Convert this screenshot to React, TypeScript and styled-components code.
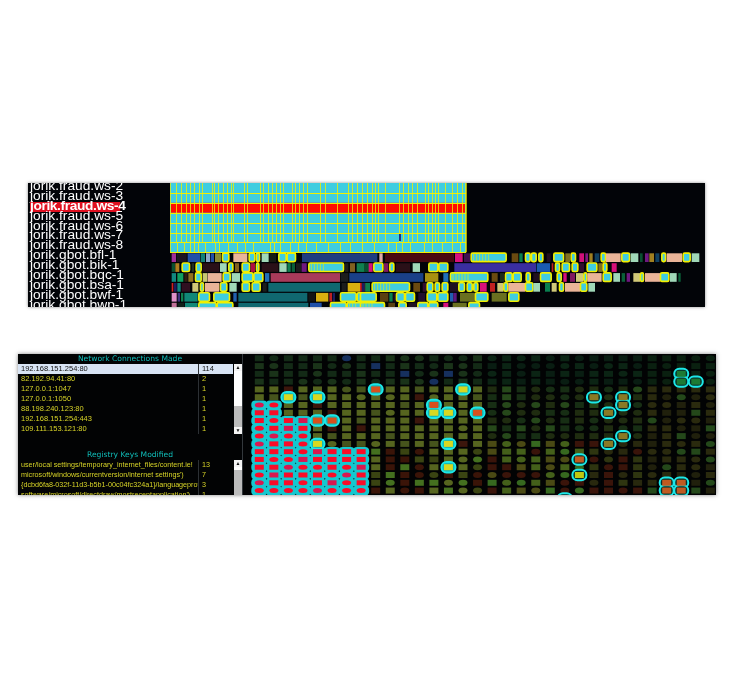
import * as React from 'react';
import styled, {createGlobalStyle} from 'styled-components';

const GlobalStyle = createGlobalStyle`
  html, body {
    margin: 0;
    padding: 0;
    background: #fff;
  }
`;

// the top chart is drawn in page coordinates, read off the zoomed reference
const ROW_H = 9.9;
const CYAN = '#3fcde0';
const YELLOW = '#f2f000';

const hostNames = [
    'jorik.fraud.ws-2', 'jorik.fraud.ws-3', 'jorik.fraud.ws-4', 'jorik.fraud.ws-5',
    'jorik.fraud.ws-6', 'jorik.fraud.ws-7', 'jorik.fraud.ws-8', 'jorik.gbot.bfl-1',
    'jorik.gbot.bik-1', 'jorik.gbot.bqc-1', 'jorik.gbot.bsa-1', 'jorik.gbot.bwf-1',
    'jorik.gbot.bwp-1',
];

const fraudCuts = [
    176, 181, 186, 190, 194, 199, 202, 212, 214, 218, 223, 227, 231, 233, 244, 247, 260, 263, 268, 272,
    276, 280, 283, 292, 295, 299, 303, 307, 320, 325, 337, 348, 352, 357, 362, 367, 372, 375, 378, 385,
    399, 403, 408, 412, 417, 425, 428, 432, 435, 438, 445, 452, 457, 462,
];
const fraud8Cuts = [
    177, 184, 190, 194, 198, 205, 215, 219, 228, 237, 245, 253, 270, 274, 280, 290, 298, 306, 316, 328,
    340, 350, 362, 374, 388, 396, 402, 410, 424, 432, 442, 452, 460,
];

type Segment = [number, number, string];

const O = 'outline';

// [zoomed x0, zoomed x1, colour]; first list is x = 20 + zx / 3, second is x = 360 + zx / 3
const rowsLeft: Segment[][] = [
    [[455, 468, '#a02c98'], [470, 500, '#1c1420'], [503, 540, '#2050a8'], [542, 555, '#108078'], [558, 570, '#8aa8c8'], [572, 582, '#2050a8'], [585, 603, '#8a8a30'], [606, 628, O], [640, 682, '#eab498'], [686, 706, O], [708, 720, O], [725, 746, '#a0d8b8'], [748, 768, '#141c14'], [775, 800, O], [800, 828, O], [846, 1050, '#1e3c80']],
    [[455, 465, '#0a5030'], [466, 478, '#b08020'], [485, 510, O], [515, 522, '#203020'], [527, 545, O], [548, 598, '#2a1018'], [600, 620, '#a0d8b8'], [625, 640, O], [645, 657, '#806020'], [665, 690, O], [692, 705, '#b01040'], [708, 718, O], [725, 775, '#2a1018'], [778, 800, '#a0d8b8'], [802, 812, '#108050'], [815, 825, '#0a6038'], [828, 845, '#1c1c1c'], [845, 860, '#701880'], [865, 972, O], [975, 985, '#1c1c1c'], [990, 1005, '#806020'], [1010, 1020, '#108050'], [1025, 1035, '#108050'], [1038, 1050, '#0a5030']],
    [[455, 468, '#108880'], [472, 490, '#10a060'], [493, 503, '#302010'], [505, 520, '#907020'], [525, 545, O], [548, 562, '#c8c870'], [563, 605, '#eab498'], [608, 632, O], [635, 660, '#a0d8b8'], [665, 700, O], [700, 730, O], [735, 748, '#2070b8'], [752, 960, '#a83a5a'], [962, 985, '#1c1c1c'], [988, 1050, '#1a4088']],
    [[455, 460, '#d02020'], [462, 470, '#1c1c60'], [472, 482, '#108880'], [485, 510, '#301020'], [517, 535, '#d0c878'], [540, 552, O], [555, 598, '#eab498'], [600, 622, O], [628, 650, '#a0d8b8'], [665, 690, O], [695, 722, O], [728, 740, '#1c1c1c'], [745, 960, '#106870'], [965, 980, '#1c1c1c'], [983, 1020, '#d8b010'], [1025, 1050, '#403010']],
    [[455, 470, '#e090c8'], [473, 480, '#403080'], [483, 490, '#108050'], [493, 533, '#108878'], [535, 570, O], [580, 630, O], [640, 650, '#2060b0'], [655, 862, '#106870'], [865, 885, '#141414'], [888, 925, '#d8b010'], [928, 936, '#c02020'], [938, 945, '#1c1c60'], [960, 1010, O], [1010, 1050, O]],
    [[455, 470, '#c07098'], [473, 493, '#102018'], [495, 533, '#108878'], [535, 590, O], [590, 640, O], [655, 865, '#106870'], [870, 905, '#2050a8'], [930, 980, O], [980, 1050, O]],
];

const rowsRight: Segment[][] = [
    [[0, 52, '#1e3c80'], [58, 68, '#e0a8a8'], [75, 282, '#4a0810'], [285, 308, '#d8107a'], [312, 330, '#401050'], [332, 440, O], [455, 475, '#6a4a10'], [478, 488, '#0a8050'], [495, 512, O], [513, 530, O], [535, 550, O], [560, 572, '#201020'], [580, 612, O], [616, 630, '#807020'], [632, 648, O], [658, 672, '#d0107a'], [676, 684, '#801880'], [688, 698, '#a08020'], [704, 718, '#104060'], [722, 738, O], [738, 782, '#eab498'], [784, 810, O], [812, 835, '#a0d8b8'], [840, 848, '#0a5030'], [855, 866, '#701880'], [868, 882, '#a08020'], [886, 898, '#104060'], [904, 918, O], [920, 966, '#eab498'], [968, 992, O], [995, 1018, '#a0d8b8']],
    [[0, 8, '#108050'], [12, 22, '#0a5030'], [26, 38, '#d8107a'], [40, 70, O], [72, 85, '#801860'], [88, 103, O], [108, 150, '#2a1018'], [158, 180, '#a0d8b8'], [205, 235, O], [235, 265, O], [283, 528, '#3a2ea0'], [530, 570, '#1a5ab0'], [575, 580, '#c02020'], [585, 600, O], [605, 630, O], [635, 655, O], [658, 672, '#301030'], [680, 712, O], [715, 728, '#807020'], [728, 742, O], [755, 770, '#d8107a']],
    [[0, 190, '#1a4088'], [195, 235, '#a89010'], [250, 265, '#2070b8'], [270, 385, O], [395, 413, '#6a4a10'], [420, 432, '#1c2c1c'], [435, 458, O], [458, 485, O], [497, 512, O], [520, 538, '#201020'], [540, 575, O], [590, 605, O], [610, 620, '#d8107a'], [630, 645, '#801860'], [648, 670, '#d0c878'], [670, 682, O], [682, 725, '#eab498'], [728, 755, O], [760, 780, '#a0d8b8'], [785, 795, '#0a6038'], [800, 810, '#701880'], [820, 840, '#d0c878'], [840, 852, O], [855, 900, '#eab498'], [900, 928, O], [930, 950, '#a0d8b8'], [955, 962, '#0a6038']],
    [[0, 5, '#d02020'], [6, 14, '#1c1c60'], [16, 30, '#108050'], [35, 150, O], [160, 180, '#6a4a10'], [188, 198, '#301030'], [200, 220, O], [224, 240, O], [245, 265, O], [270, 295, '#201020'], [295, 315, O], [320, 338, O], [340, 355, O], [360, 380, '#d8107a'], [390, 405, '#c02020'], [412, 430, '#d0c878'], [430, 445, O], [445, 495, '#eab498'], [495, 520, O], [520, 540, '#a0d8b8'], [555, 570, '#0a8050'], [575, 590, '#d0c878'], [597, 612, O], [615, 660, '#eab498'], [660, 682, O], [685, 705, '#a0d8b8']],
    [[0, 50, O], [60, 85, '#5a4010'], [88, 98, '#0a8050'], [100, 108, '#201020'], [108, 135, O], [135, 165, O], [175, 195, '#201030'], [200, 232, O], [232, 265, O], [270, 280, '#2060b0'], [280, 290, '#601880'], [300, 345, '#6a7020'], [345, 385, O], [395, 440, '#6a7020'], [445, 478, O]],
    [[0, 75, O], [85, 105, '#5a4010'], [115, 140, O], [145, 170, '#201020'], [172, 205, O], [205, 235, O], [250, 265, '#d8107a'], [278, 320, '#6a7020'], [325, 360, O]],
];

const TimelineRow = ({segments, base, y}: { segments: Segment[]; base: number; y: number }) => (
    <>
        {segments.map(([x0, x1, color], i) => {
            const left = base + x0 / 3;
            const width = (x1 - x0) / 3;
            if (color !== O) {
                return <rect key={i} x={left} y={y + 1} width={width} height={ROW_H - 1.2} fill={color}/>;
            }
            // the longer outlined blocks are striped over their left half
            const stripes = width > 20
                ? Array.from({length: Math.floor(width / 6)}, (_, n) => left + 3 * (n + 1))
                : [];
            return (
                <g key={i}>
                    <rect x={left + 0.5} y={y + 0.8} width={width - 1} height={ROW_H - 1.4} rx={1.5}
                          fill={CYAN} stroke={YELLOW} strokeWidth={1.6}/>
                    {stripes.map(x => (
                        <line key={x} x1={x} x2={x} y1={y + 1} y2={y + ROW_H - 1} stroke={YELLOW} strokeWidth={0.6}/>
                    ))}
                </g>
            );
        })}
    </>
);

const TimelineChart = () => {
    const top = 183;
    const fraudBottom = top + 7 * ROW_H;
    return (
        <svg width={535} height={124} viewBox='170 183 535 124'>
            <rect x={170} y={top} width={296} height={7 * ROW_H} fill={CYAN}/>
            <rect x={171} y={top + 2 * ROW_H} width={294} height={ROW_H} fill='#ff0c00'/>
            {[1, 2, 3, 4, 5, 6, 7].map(i => (
                <line key={i} x1={170} x2={466} y1={Math.round(top + i * ROW_H) + 0.5} y2={Math.round(top + i * ROW_H) + 0.5}
                      stroke={YELLOW} strokeWidth={1}/>
            ))}
            {fraudCuts.map(x => (
                <line key={x} x1={x + 0.5} x2={x + 0.5} y1={top} y2={top + 6 * ROW_H} stroke={YELLOW} strokeWidth={0.8}/>
            ))}
            {fraud8Cuts.map(x => (
                <line key={x} x1={x + 0.5} x2={x + 0.5} y1={top + 6 * ROW_H} y2={fraudBottom} stroke={YELLOW} strokeWidth={0.8}/>
            ))}
            <line x1={170} x2={170} y1={top} y2={fraudBottom} stroke={YELLOW} strokeWidth={1.4}/>
            <line x1={466} x2={466} y1={top} y2={fraudBottom} stroke={YELLOW} strokeWidth={1.4}/>
            <rect x={399} y={234} width={2} height={7} fill='#203080'/>
            {rowsLeft.map((segments, i) => (
                <TimelineRow key={i} segments={segments} base={20} y={top + (i + 7) * ROW_H}/>
            ))}
            {rowsRight.map((segments, i) => (
                <TimelineRow key={i} segments={segments} base={360} y={top + (i + 7) * ROW_H}/>
            ))}
        </svg>
    );
};

// heat map
const COL_0 = 258.3;
const COL_W = 14.55;
const ROW_0 = 358.3;
const CELL_H = 7.78;

const hash = (r: number, c: number) => {
    const v = Math.sin(r * 12.9898 + c * 78.233) * 43758.5453;
    return v - Math.floor(v);
};

const cellColor = (r: number, c: number) => {
    const h = hash(r, c);
    if (c < 16) {
        if (r < 4) return h > 0.94 ? '#16305e' : h > 0.5 ? '#1a3319' : '#132a16';
        if (r < 12 || c < 8) return h > 0.92 ? '#3c160c' : h > 0.75 ? '#46541c' : '#56651f';
        return h > 0.72 ? '#3a1408' : h > 0.5 ? '#3a4412' : h > 0.25 ? '#44701f' : '#56651f';
    }
    if (c >= 27) {
        if (r < 4) return '#0a2010';
        return h > 0.8 ? '#24481a' : h > 0.4 ? '#2a2a0e' : '#20200c';
    }
    if (r < 4) return h > 0.5 ? '#0b2414' : '#091d12';
    if (r < 11) return h > 0.8 ? '#26481a' : h > 0.4 ? '#172e14' : '#1f2c10';
    if (c >= 23) return h > 0.7 ? '#3a140a' : h > 0.35 ? '#2e3510' : '#28280e';
    return h > 0.75 ? '#3a140a' : h > 0.45 ? '#44601a' : h > 0.2 ? '#4a4a14' : '#36681f';
};

const YL = '#d8d820';
const OR = '#d8501c';
const ORY = '#c05a20';
const BRN = '#8a7a24';
const GRN = '#1c7a34';

const highlights: [number, number, string][] = [
    [5, 2, YL], [5, 4, YL], [4, 8, OR], [4, 14, YL], [6, 12, OR], [7, 12, YL], [7, 13, YL], [7, 15, OR],
    [11, 4, YL], [11, 13, YL], [14, 13, YL], [8, 4, OR], [8, 5, OR],
    [5, 23, BRN], [5, 25, BRN], [6, 25, BRN], [7, 24, BRN], [10, 25, BRN], [11, 24, BRN],
    [13, 22, ORY], [15, 22, '#c0c810'], [2, 29, GRN], [3, 29, GRN], [3, 30, GRN],
    [16, 28, ORY], [16, 29, ORY], [17, 28, ORY], [17, 29, ORY], [18, 21, BRN],
];

const isRedCell = (r: number, c: number) =>
    (c < 2 && r >= 6) || (c < 4 && r >= 8) || (c < 8 && r >= 12);

const HeatCell = ({r, c, fill, rectChance, w = 9, h = 6}: {
    r: number; c: number; fill: string; rectChance: number; w?: number; h?: number;
}) => {
    const x = COL_0 + c * COL_W;
    const y = ROW_0 + r * CELL_H;
    return hash(c, r) < rectChance
        ? <rect x={x - w / 2} y={y - h / 2} width={w} height={h} fill={fill}/>
        : <ellipse cx={x} cy={y} rx={w / 2} ry={h / 2} fill={fill}/>;
};

const HeatMap = () => {
    const rows = Array.from({length: 19}, (_, r) => r);
    const cols = Array.from({length: 32}, (_, c) => c);
    const highlighted = new Map(highlights.map(([r, c, fill]) => [`${r}-${c}`, fill]));
    return (
        <svg width={471} height={141} viewBox='245 354 471 141'>
            {rows.map(r => cols.map(c => (
                <HeatCell key={`${r}-${c}`} r={r} c={c} fill={cellColor(r, c)}
                          rectChance={c < 16 && r >= 4 && r < 12 ? 0.92 : 0.6}/>
            )))}
            {rows.map(r => cols.filter(c => isRedCell(r, c)).map(c => (
                <rect key={`g${r}-${c}`} x={COL_0 + c * COL_W - 8} y={ROW_0 + r * CELL_H - 4.6}
                      width={16} height={9.2} rx={4} fill='#14c8d0'/>
            )))}
            {highlights.map(([r, c]) => (
                <rect key={`h${r}-${c}`} x={COL_0 + c * COL_W - 7} y={ROW_0 + r * CELL_H - 5.2}
                      width={14} height={10.4} rx={5} fill={c < 16 ? '#12b8b8' : '#06302a'} stroke='#1ce8e8' strokeWidth={2}/>
            ))}
            {highlights.map(([r, c, fill]) => (
                <rect key={`i${r}-${c}`} x={COL_0 + c * COL_W - 4.5} y={ROW_0 + r * CELL_H - 3}
                      width={9} height={6} fill={fill}/>
            ))}
            {rows.map(r => cols.filter(c => isRedCell(r, c) && !highlighted.has(`${r}-${c}`)).map(c => (
                <HeatCell key={`r${r}-${c}`} r={r} c={c} w={9} h={5} rectChance={0.55}
                          fill={(r + c) % 5 === 1 ? '#d81850' : '#fa0c28'}/>
            )))}
        </svg>
    );
};

const connections: [string, number][] = [
    ['192.168.151.254:80', 114],
    ['82.192.94.41:80', 2],
    ['127.0.0.1:1047', 1],
    ['127.0.0.1:1050', 1],
    ['88.198.240.123:80', 1],
    ['192.168.151.254:443', 1],
    ['109.111.153.121:80', 1],
];

const registryKeys: [string, number][] = [
    ['user/local settings/temporary_internet_files/content.ie!', 13],
    ['microsoft/windows/currentversion/internet settings\')', 7],
    ['{dcbd6fa8-032f-11d3-b5b1-00c04fc324a1}/languageprof', 3],
    ['software/microsoft/directdraw/mostrecentapplication\')', 1],
];

const DataTable = ({rows, selected, size}: { rows: [string, number][]; selected?: number; size: number }) => (
    <div>
        {rows.map(([name, count], i) => (
            <TableRow key={name} $selected={i === selected} $size={size}>
                <NameCell>{name}</NameCell>
                <CountCell>{count}</CountCell>
            </TableRow>
        ))}
    </div>
);

export default function App() {
    return (
        <Page>
            <GlobalStyle/>
            <TopPanel>
                <HostColumn>
                    {hostNames.map(name => (
                        <HostLabel key={name} $alert={name === 'jorik.fraud.ws-4'}>{name}</HostLabel>
                    ))}
                </HostColumn>
                <TimelineChart/>
            </TopPanel>
            <BottomPanel>
                <ListColumn>
                    <SectionTitle>Network Connections Made</SectionTitle>
                    <ListFrame $height={70}>
                        <TableBody><DataTable rows={connections} selected={0} size={7.5}/></TableBody>
                        <ScrollBar $trackHeight={35}>
                            <ScrollButton>▲</ScrollButton>
                            <ScrollThumb/>
                            <ScrollButton>▼</ScrollButton>
                        </ScrollBar>
                    </ListFrame>
                    <SectionTitle $gap={16}>Registry Keys Modified</SectionTitle>
                    <ListFrame $height={40}>
                        <TableBody><DataTable rows={registryKeys} size={7.2}/></TableBody>
                        <ScrollBar $trackHeight={3}>
                            <ScrollButton>▲</ScrollButton>
                            <ScrollThumb/>
                        </ScrollBar>
                    </ListFrame>
                </ListColumn>
                <HeatMapArea><HeatMap/></HeatMapArea>
            </BottomPanel>
        </Page>
    );
}

const Page = styled.div`
  width: 733px;
  height: 679px;
  padding-top: 183px;
  box-sizing: border-box;
  overflow: hidden;
  background: #fff;
  font-family: "Liberation Sans", Arial, sans-serif;
`;

const TopPanel = styled.div`
  display: flex;
  width: 677px;
  height: 124px;
  margin-left: 28px;
  overflow: hidden;
  background: #020408;
  box-shadow: 0 0 3px rgba(90, 90, 90, 0.7);
  filter: blur(0.3px);
`;

const HostColumn = styled.div`
  flex: 0 0 142px;
  margin-top: -1px;
  padding-left: 2px;
  box-sizing: border-box;
`;

// the labels in the picture are slightly stretched sideways
const HostLabel = styled.div<{ $alert?: boolean }>`
  width: 82px;
  height: ${ROW_H}px;
  line-height: ${ROW_H}px;
  font-size: 12.5px;
  white-space: nowrap;
  color: #fff;
  font-weight: ${props => props.$alert ? 700 : 400};
  letter-spacing: ${props => props.$alert ? '-0.35px' : '0'};
  background: ${props => props.$alert ? '#e01020' : 'transparent'};
  transform: scaleX(1.1);
  transform-origin: left center;
`;

const BottomPanel = styled.div`
  display: flex;
  width: 698px;
  height: 141px;
  margin: 47px 0 0 18px;
  overflow: hidden;
  background: #020304;
  box-shadow: 0 0 4px rgba(80, 80, 80, 0.7);
  filter: blur(0.35px);
`;

const ListColumn = styled.div`
  flex: 0 0 224px;
  box-sizing: border-box;
  border-right: 1px solid #33383c;
`;

const SectionTitle = styled.div<{ $gap?: number }>`
  height: 10px;
  margin-top: ${props => props.$gap ?? 0}px;
  line-height: 10px;
  text-align: center;
  font-family: "DejaVu Sans", sans-serif;
  font-size: 7.6px;
  color: #10bcb8;
`;

const ListFrame = styled.div<{ $height: number }>`
  display: flex;
  height: ${props => props.$height}px;
  overflow: hidden;
`;

const TableBody = styled.div`
  flex: 0 0 215px;
`;

const TableRow = styled.div<{ $selected?: boolean; $size: number }>`
  display: flex;
  height: 10px;
  line-height: 10px;
  font-size: ${props => props.$size}px;
  white-space: nowrap;
  color: ${props => props.$selected ? '#101010' : '#d8d428'};
  background: ${props => props.$selected ? '#d8e4f4' : 'transparent'};
`;

const NameCell = styled.div`
  flex: 0 0 181px;
  padding-left: 3px;
  box-sizing: border-box;
  overflow: hidden;
  border-right: 1px solid #2c3034;
`;

const CountCell = styled.div`
  flex: 1;
  padding-left: 3px;
`;

const ScrollBar = styled.div<{ $trackHeight: number }>`
  flex: 0 0 8px;
  margin-left: 1px;
  display: flex;
  flex-direction: column;
  background: #fff;
  & > :first-child {
    margin-bottom: ${props => props.$trackHeight}px;
  }
`;

const ScrollButton = styled.div`
  flex: 0 0 7px;
  height: 7px;
  line-height: 7px;
  text-align: center;
  font-size: 5px;
  color: #111;
  background: #f4f4f4;
`;

const ScrollThumb = styled.div`
  flex: 1;
  background: #bcbcbc;
`;

const HeatMapArea = styled.div`
  flex: 1;
  margin-left: 3px;
`;
